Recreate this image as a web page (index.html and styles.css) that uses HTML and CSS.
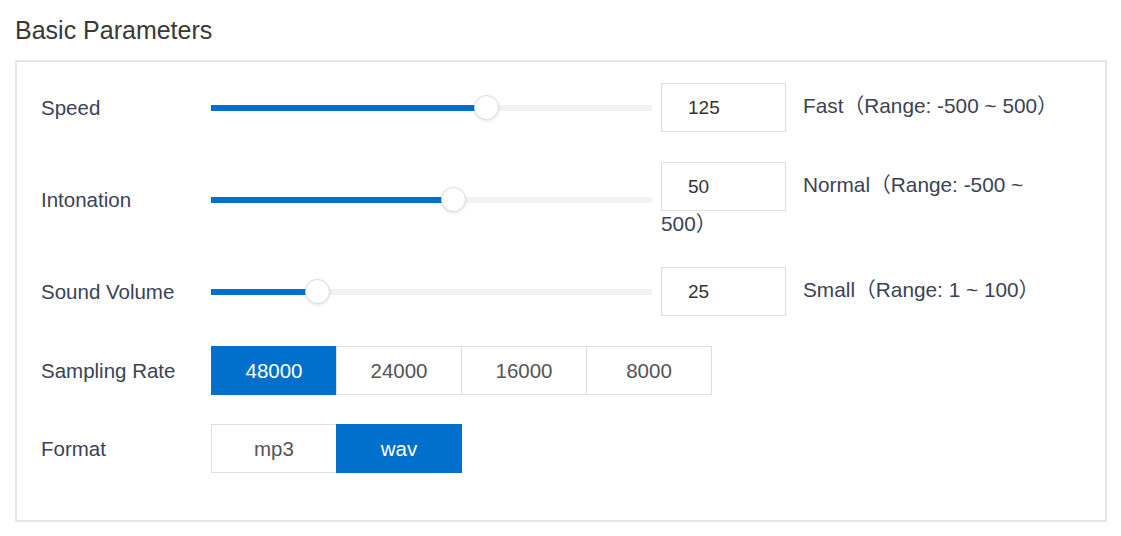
FILE: index.html
```html
<!DOCTYPE html>
<html>
<head>
<meta charset="utf-8">
<link rel="stylesheet" href="styles.css">
</head>
<body>
<h2 class="title">Basic Parameters</h2>
<div class="panel">
  <div class="row">
    <div class="label">Speed</div>
    <div class="slider"><div class="fill" style="width:62.5%"></div><div class="thumb" style="left:62.5%"></div></div>
    <div class="value"><span class="num">125</span><span class="desc">Fast（Range: -500 ~ 500）</span></div>
  </div>
  <div class="row">
    <div class="label">Intonation</div>
    <div class="slider"><div class="fill" style="width:55%"></div><div class="thumb" style="left:55%"></div></div>
    <div class="value"><span class="num">50</span><span class="desc">Normal（Range: -500 ~ 500）</span></div>
  </div>
  <div class="row">
    <div class="label">Sound Volume</div>
    <div class="slider"><div class="fill" style="width:24.2%"></div><div class="thumb" style="left:24.2%"></div></div>
    <div class="value"><span class="num">25</span><span class="desc">Small（Range: 1 ~ 100）</span></div>
  </div>
  <div class="row">
    <div class="label">Sampling Rate</div>
    <div class="seg">
      <span class="opt active">48000</span><span class="opt">24000</span><span class="opt">16000</span><span class="opt">8000</span>
    </div>
  </div>
  <div class="row row-tight">
    <div class="label">Format</div>
    <div class="seg">
      <span class="opt">mp3</span><span class="opt active">wav</span>
    </div>
  </div>
</div>
</body>
</html>
```
FILE: styles.css
```css
* { box-sizing: border-box; }
body {
  margin: 0;
  background: #fff;
  font-family: "Liberation Sans", "Noto Sans CJK SC", sans-serif;
  color: #333;
}
.title {
  margin: 0;
  padding: 15px 0 0 15px;
  height: 60px;
  font-size: 25px;
  font-weight: normal;
  color: #383838;
  line-height: 30px;
}
.panel {
  margin-left: 15px;
  width: 1092px;
  border: 2px solid #e6e6e6;
  padding: 21px 24px 47px 24px;
  display: flex;
  flex-direction: column;
  gap: 30px;
}
.row {
  display: flex;
  align-items: center;
}
.row-tight {
  margin-top: -1px;
}
.label {
  width: 170px;
  font-size: 20.5px;
  color: #3b4256;
}
.slider {
  position: relative;
  width: 441px;
  height: 6px;
  background: #f2f2f2;
}
.fill {
  height: 6px;
  background: #0070cc;
}
.thumb {
  position: absolute;
  top: 50%;
  width: 25px;
  height: 25px;
  margin-left: -12.5px;
  margin-top: -12.5px;
  border-radius: 50%;
  background: #fff;
  border: 1px solid #dcdcdc;
  box-shadow: 0 1px 3px rgba(0,0,0,0.12);
}
.value {
  margin-left: 9px;
  width: 402px;
  font-size: 20.8px;
  line-height: 26px;
  color: #3b4256;
}
.num {
  display: inline-block;
  width: 125px;
  height: 49px;
  border: 1px solid #dedede;
  padding-left: 26px;
  line-height: 47px;
  font-size: 19px;
  color: #333;
  vertical-align: middle;
}
.desc {
  margin-left: 17px;
}
.seg {
  display: flex;
}
.opt {
  width: 126px;
  height: 49px;
  border: 1px solid #dedede;
  margin-left: -1px;
  display: flex;
  align-items: center;
  justify-content: center;
  font-size: 20.5px;
  color: #555;
}
.opt:first-child { margin-left: 0; }
.opt.active {
  background: #0070cc;
  border-color: #0070cc;
  color: #fff;
}
```
